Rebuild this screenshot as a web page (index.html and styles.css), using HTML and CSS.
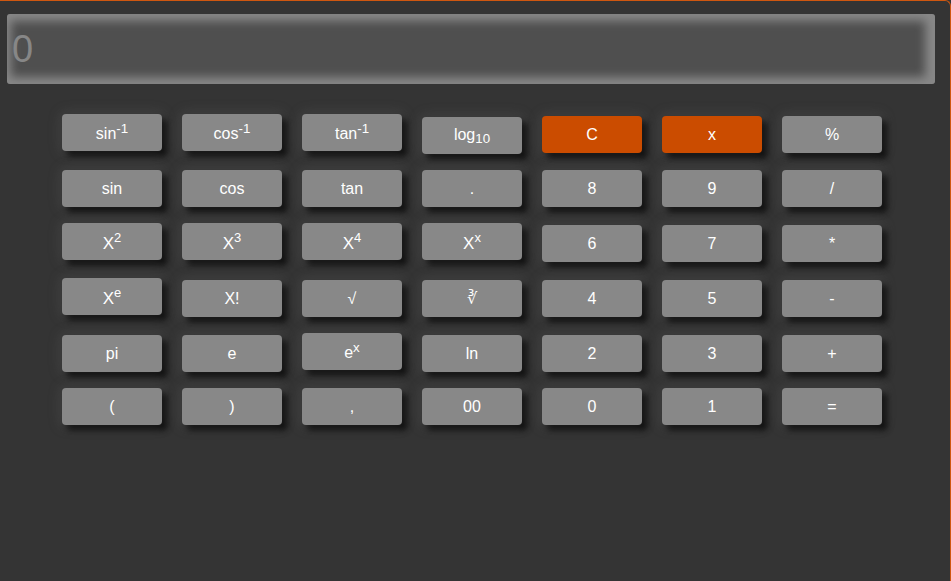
FILE: index.html
```html
<!DOCTYPE html>
<html>
<head>
<meta charset="utf-8">
<link rel="stylesheet" href="styles.css">
</head>
<body>
<div class="calc">
  <div class="display"><span class="value">0</span></div>
  <div class="keypad">
    <div class="row">
      <button class="key">sin<sup>-1</sup></button>
      <button class="key">cos<sup>-1</sup></button>
      <button class="key">tan<sup>-1</sup></button>
      <button class="key">log<sub>10</sub></button>
      <button class="key orange">C</button>
      <button class="key orange">x</button>
      <button class="key">%</button>
    </div>
    <div class="row">
      <button class="key">sin</button>
      <button class="key">cos</button>
      <button class="key">tan</button>
      <button class="key">.</button>
      <button class="key">8</button>
      <button class="key">9</button>
      <button class="key">/</button>
    </div>
    <div class="row">
      <button class="key big">X<sup>2</sup></button>
      <button class="key big">X<sup>3</sup></button>
      <button class="key big">X<sup>4</sup></button>
      <button class="key big">X<sup>x</sup></button>
      <button class="key">6</button>
      <button class="key">7</button>
      <button class="key">*</button>
    </div>
    <div class="row">
      <button class="key big">X<sup>e</sup></button>
      <button class="key">X!</button>
      <button class="key">√</button>
      <button class="key">∛</button>
      <button class="key">4</button>
      <button class="key">5</button>
      <button class="key">-</button>
    </div>
    <div class="row">
      <button class="key">pi</button>
      <button class="key">e</button>
      <button class="key">e<sup>x</sup></button>
      <button class="key">ln</button>
      <button class="key">2</button>
      <button class="key">3</button>
      <button class="key">+</button>
    </div>
    <div class="row">
      <button class="key">(</button>
      <button class="key">)</button>
      <button class="key">,</button>
      <button class="key">00</button>
      <button class="key">0</button>
      <button class="key">1</button>
      <button class="key">=</button>
    </div>
  </div>
</div>
</body>
</html>
```
FILE: styles.css
```css
html, body {
  margin: 0;
  padding: 0;
  background: #343434;
}
body {
  font-family: "Liberation Sans", Arial, sans-serif;
  overflow: hidden;
}
.calc {
  box-sizing: border-box;
  min-height: 100vh;
  width: 951px;
  background: #343434;
  border-top: 1px solid #cf5710;
  border-right: 1px solid #cf5710;
  border-top-right-radius: 6px;
  padding: 13px 15px 0 7px;
}
.display {
  height: 70px;
  border-radius: 3px;
  background: #4f4f4f;
  box-shadow: inset -3px 0 10px 7px #888;
  overflow: hidden;
  display: flex;
  align-items: center;
}
.value {
  font-size: 38px;
  color: #878787;
  margin-left: 5px;
  margin-top: 1px;
}
.keypad {
  margin-top: 22px;
  padding-left: 45px;
}
.row {
  display: flex;
  align-items: baseline;
}
.key {
  width: 100px;
  height: 37px;
  margin: 8px 10px;
  padding: 0;
  border: 0;
  border-radius: 4px;
  background: #888888;
  color: #ffffff;
  font-family: "Liberation Sans", Arial, sans-serif;
  font-size: 16px;
  box-shadow: 0 0 12px 3px rgba(110, 110, 110, 0.22), 5px 5px 6px #080808;
}
.key.big {
  font-size: 17px;
}
.key.big sup {
  font-size: 13px;
  vertical-align: 7px;
}
.key sub {
  vertical-align: -3px;
}
.orange {
  background: #cb4c00;
}
```
